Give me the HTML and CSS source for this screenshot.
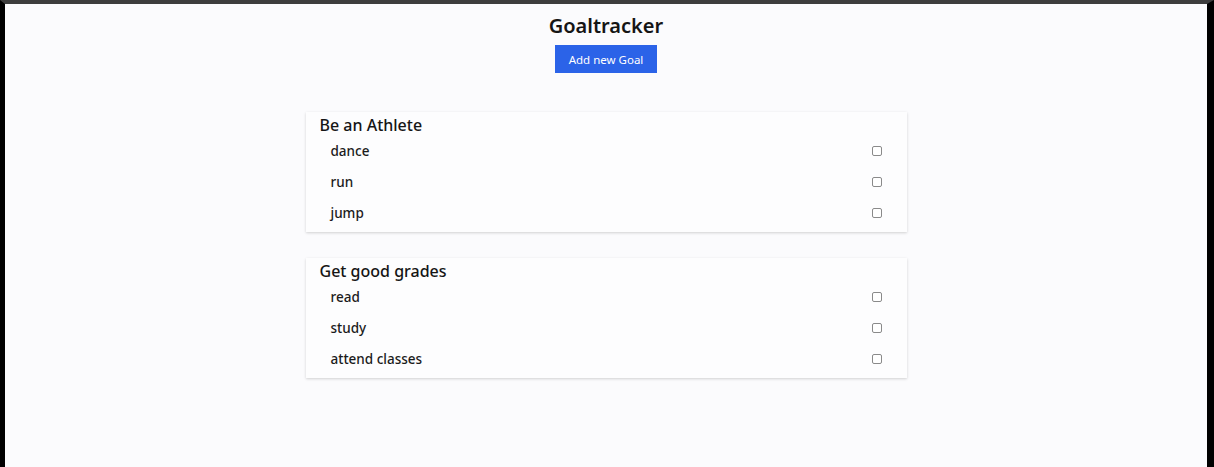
FILE: index.html
```html
<!DOCTYPE html>
<html lang="en">
<head>
<meta charset="utf-8">
<title>Goaltracker</title>
<link rel="stylesheet" href="styles.css">
</head>
<body>
<div class="frame">
  <header class="header">
    <h1 class="title">Goaltracker</h1>
    <button class="add-btn" type="button">Add new Goal</button>
  </header>
  <main class="goals">
    <section class="card">
      <h2 class="card-title">Be an Athlete</h2>
      <ul class="tasks">
        <li class="task"><span>dance</span><input class="check" type="checkbox"></li>
        <li class="task"><span>run</span><input class="check" type="checkbox"></li>
        <li class="task"><span>jump</span><input class="check" type="checkbox"></li>
      </ul>
    </section>
    <section class="card">
      <h2 class="card-title">Get good grades</h2>
      <ul class="tasks">
        <li class="task"><span>read</span><input class="check" type="checkbox"></li>
        <li class="task"><span>study</span><input class="check" type="checkbox"></li>
        <li class="task"><span>attend classes</span><input class="check" type="checkbox"></li>
      </ul>
    </section>
  </main>
</div>
</body>
</html>
```

FILE: styles.css
```css
* { box-sizing: border-box; }

html, body {
  margin: 0;
  padding: 0;
  background: #000;
}

.frame {
  height: 467px;
  background: #fbfbfd;
  border-left: 5px solid #000;
  border-right: 7px solid #000;
  border-top: 4px solid #3d3d3d;
  font-family: "Noto Sans", "Open Sans", sans-serif;
  color: #1b1b1b;
  overflow: hidden;
}

.header {
  display: flex;
  flex-direction: column;
  align-items: center;
  padding-top: 7px;
}

.title {
  margin: 0;
  font-size: 20px;
  line-height: 30px;
  font-weight: 600;
  color: #151515;
}

.add-btn {
  margin-top: 4px;
  width: 102px;
  height: 28px;
  border: none;
  background: #2b63e8;
  color: #fff;
  font-family: inherit;
  font-size: 11.5px;
  padding: 0;
  cursor: pointer;
}

.goals {
  display: flex;
  flex-direction: column;
  align-items: center;
  gap: 26px;
  margin-top: 39px;
}

.card {
  width: 601px;
  background: #fdfdfe;
  box-shadow: 0 1px 3px rgba(0, 0, 0, 0.12), 0 1px 2px rgba(0, 0, 0, 0.06);
  padding: 4px 25px 4px 14px;
}

.card-title {
  margin: 0;
  font-size: 16px;
  line-height: 19px;
  font-weight: 500;
  color: #151515;
}

.tasks {
  list-style: none;
  margin: 0;
  padding: 0 0 0 11px;
}

.task {
  display: flex;
  align-items: center;
  justify-content: space-between;
  height: 31px;
  font-size: 13.5px;
  font-weight: 500;
  color: #1b1b1b;
}

.check {
  appearance: none;
  -webkit-appearance: none;
  margin: 0;
  width: 10px;
  height: 10px;
  border: 1px solid #8a8a8a;
  border-radius: 2px;
  background: #fff;
}
```
